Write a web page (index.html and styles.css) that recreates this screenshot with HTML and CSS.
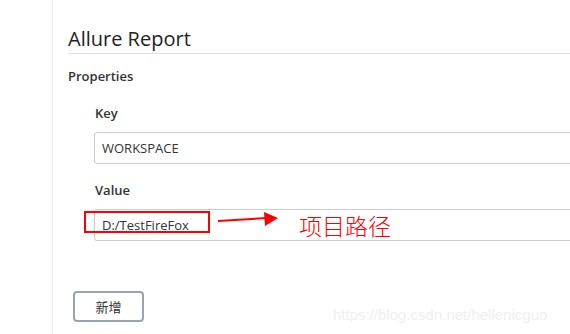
FILE: index.html
```html
<!DOCTYPE html>
<html>
<head>
<meta charset="utf-8">
<link rel="stylesheet" href="styles.css">
</head>
<body>
<div class="page">
  <div class="gutter"></div>
  <div class="main">
    <h1 class="title">Allure Report</h1>
    <div class="section">Properties</div>
    <div class="prop">
      <label class="label">Key</label>
      <div class="input">WORKSPACE</div>
      <label class="label label-value">Value</label>
      <div class="input input-value">D:/TestFireFox</div>
    </div>
    <button class="btn">新增</button>
  </div>
  <div class="mark-box"></div>
  <svg class="mark-arrow" width="64" height="18" viewBox="0 0 64 18">
    <line x1="1" y1="11" x2="50" y2="8" stroke="#f00" stroke-width="2"/>
    <polygon points="47,2 61,8 48,16" fill="#f00"/>
  </svg>
  <div class="mark-text">项目路径</div>
  <div class="watermark">https://blog.csdn.net/hellenicguo</div>
</div>
</body>
</html>
```
FILE: styles.css
```css
html, body {
  margin: 0;
  padding: 0;
  background: #fff;
}
.page {
  position: relative;
  display: flex;
  width: 570px;
  height: 334px;
  overflow: hidden;
  font-family: "Open Sans", "Noto Sans CJK SC", sans-serif;
  color: #333;
}
.gutter {
  width: 52px;
  flex: none;
  border-right: 1px solid #e6edf1;
}
.main {
  flex: 1;
  padding-left: 15px;
  min-width: 0;
}
.title {
  margin: 0;
  padding-top: 25px;
  font-size: 20px;
  font-weight: 500;
  line-height: 28px;
  border-bottom: 1px solid #e0e0e0;
  padding-bottom: 0;
  color: #222;
}
.section {
  margin-top: 13px;
  font-size: 13px;
  font-weight: 600;
  line-height: 18px;
}
.prop {
  padding-left: 26px;
  margin-top: 19px;
}
.label {
  display: block;
  font-size: 13px;
  font-weight: 600;
  line-height: 18px;
  padding-left: 1px;
}
.input {
  margin-top: 10px;
  width: 600px;
  height: 30px;
  border: 1px solid #ccc;
  border-radius: 3px;
  box-sizing: content-box;
  font-size: 13px;
  line-height: 30px;
  padding-left: 7px;
  color: #333;
}
.label-value {
  margin-top: 17px;
}
.btn {
  display: block;
  margin-top: 50px;
  margin-left: 5px;
  width: 71px;
  height: 31px;
  border: 2px solid #9aa4ad;
  border-radius: 4px;
  background: #fff;
  font-family: "Noto Sans CJK SC", sans-serif;
  font-size: 13px;
  color: #333;
  padding: 0;
}
.mark-box {
  position: absolute;
  left: 84px;
  top: 211px;
  width: 122px;
  height: 18px;
  border: 2px solid #f00;
}
.mark-arrow {
  position: absolute;
  left: 217px;
  top: 210px;
}
.mark-text {
  position: absolute;
  left: 299px;
  top: 210px;
  font-family: "Noto Sans CJK SC", sans-serif;
  font-weight: 300;
  font-size: 23px;
  line-height: 30px;
  color: #f00;
}
.watermark {
  position: absolute;
  left: 333px;
  top: 306px;
  font-family: "Liberation Sans", sans-serif;
  font-size: 15px;
  color: #efefef;
}
```
